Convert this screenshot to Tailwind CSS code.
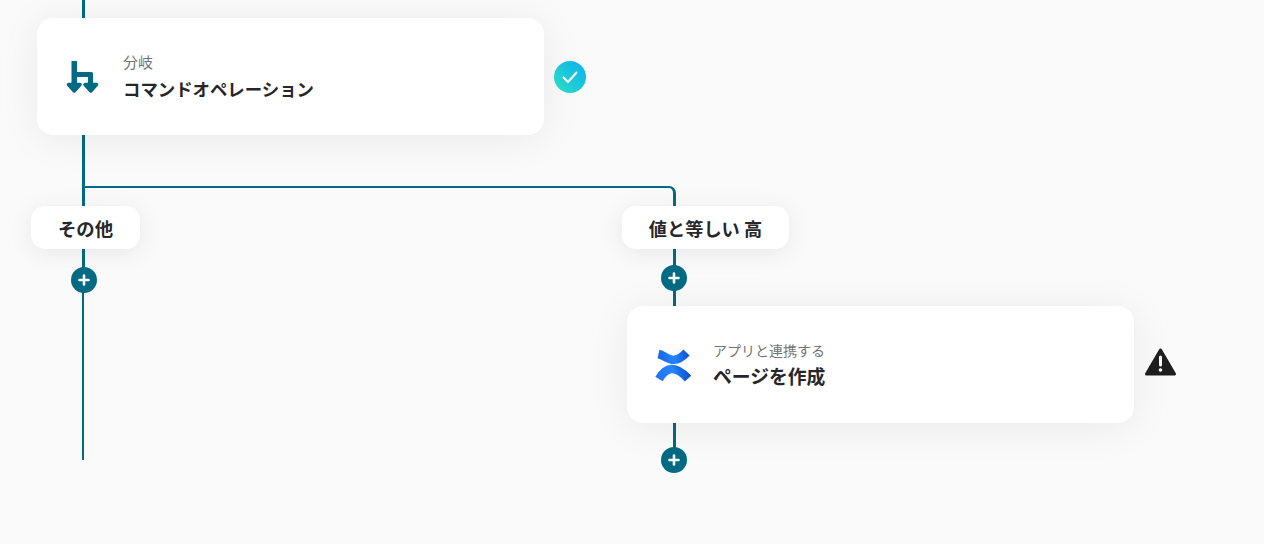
<!DOCTYPE html>
<html lang="ja">
<head>
<meta charset="utf-8">
<script src="https://cdn.jsdelivr.net/npm/@tailwindcss/browser@4"></script>
</head>
<body class="m-0">
<div class="relative w-[1264px] h-[544px] overflow-hidden bg-[#fafafa] text-[#27272a] font-['Noto_Sans_CJK_JP','Noto_Sans',sans-serif]">
  <!-- connectors -->
  <div class="absolute left-[82px] top-0 w-[3px] h-[280px] bg-[#036a83]"></div>
  <div class="absolute left-[82px] top-[280px] w-[2px] h-[180px] bg-[#036a83]"></div>
  <div class="absolute left-[85px] top-[186px] w-[591px] h-[30px] border-t-2 border-r-[3px] border-[#036a83] rounded-tr-[7px]"></div>
  <div class="absolute left-[673px] top-[240px] w-[3px] h-[70px] bg-[#036a83]"></div>
  <div class="absolute left-[673px] top-[420px] w-[3px] h-[30px] bg-[#036a83]"></div>

  <!-- node 1 -->
  <div class="absolute left-[37px] top-[18px] w-[507px] h-[117px] rounded-[16px] bg-white shadow-[0_4px_40px_rgba(0,0,0,0.07)] flex items-center pl-[28px] gap-[22px]">
    <svg class="w-[36px] h-[36px] shrink-0" viewBox="0 0 36 36" fill="#036a83">
      <path d="M6.500 2h5.500v11h14.500a1.500 1.500 0 0 1 1.500 1.500V26h-5v-8H12v8H6.500z"/>
      <path d="M3.500 25.500h11.500l-5.750 6.500z" stroke="#036a83" stroke-width="3.500" stroke-linejoin="round"/>
      <path d="M20 25.500h11.500l-5.750 6.500z" stroke="#036a83" stroke-width="3.500" stroke-linejoin="round"/>
    </svg>
    <div class="flex flex-col pt-[1px]">
      <span class="text-[15px] leading-[20px] text-[#737373]">分岐</span>
      <span class="text-[17.4px] leading-[28px] mt-[3px] font-bold whitespace-nowrap">コマンドオペレーション</span>
    </div>
  </div>
  <div class="absolute left-[554px] top-[61px] w-[32px] h-[32px] rounded-full bg-gradient-to-tr from-[#30e0c0] to-[#10aef0] flex items-center justify-center">
    <svg class="w-[18px] h-[18px]" viewBox="0 0 18 18" fill="none" stroke="#fff" stroke-width="2" stroke-linecap="round" stroke-linejoin="round"><path d="M2.500 9.500l4.500 4.500 8.500-9.500"/></svg>
  </div>

  <!-- pills -->
  <div class="absolute left-[31px] top-[206px] w-[109px] h-[43px] rounded-[14px] bg-white shadow-[0_4px_24px_rgba(0,0,0,0.08)] flex items-center justify-center pt-[2px] text-[18.400px] font-bold">その他</div>
  <div class="absolute left-[622px] top-[206px] w-[167px] h-[43px] rounded-[14px] bg-white shadow-[0_4px_24px_rgba(0,0,0,0.08)] flex items-center justify-center pt-[2px] text-[18.200px] font-bold whitespace-nowrap">値と等しい 高</div>

  <!-- plus buttons -->
  <div class="absolute left-[71px] top-[267px] w-[26px] h-[26px] rounded-full bg-[#036a83] flex items-center justify-center">
    <svg class="w-[12px] h-[12px]" viewBox="0 0 12 12" stroke="#fff" stroke-width="2.600" stroke-linecap="round"><path d="M6 1.500v9M1.500 6h9"/></svg>
  </div>
  <div class="absolute left-[661px] top-[265px] w-[26px] h-[26px] rounded-full bg-[#036a83] flex items-center justify-center">
    <svg class="w-[12px] h-[12px]" viewBox="0 0 12 12" stroke="#fff" stroke-width="2.600" stroke-linecap="round"><path d="M6 1.500v9M1.500 6h9"/></svg>
  </div>
  <div class="absolute left-[661px] top-[447px] w-[26px] h-[26px] rounded-full bg-[#036a83] flex items-center justify-center">
    <svg class="w-[12px] h-[12px]" viewBox="0 0 12 12" stroke="#fff" stroke-width="2.600" stroke-linecap="round"><path d="M6 1.500v9M1.500 6h9"/></svg>
  </div>

  <!-- node 2 -->
  <div class="absolute left-[627px] top-[306px] w-[507px] h-[117px] rounded-[16px] bg-white shadow-[0_4px_40px_rgba(0,0,0,0.07)] flex items-center pl-[28px] gap-[22px]">
    <svg class="w-[36px] h-[36px] shrink-0" viewBox="0 0 36 36" fill="none" stroke-width="8.500">
      <defs>
        <linearGradient id="cfa" gradientUnits="userSpaceOnUse" x1="34" y1="4" x2="3" y2="10"><stop offset="0" stop-color="#0b52cc"/><stop offset="0.5" stop-color="#2684ff"/><stop offset="1" stop-color="#1a66e6"/></linearGradient>
        <linearGradient id="cfb" gradientUnits="userSpaceOnUse" x1="3" y1="32" x2="34" y2="26"><stop offset="0" stop-color="#1f74f0"/><stop offset="0.5" stop-color="#2684ff"/><stop offset="1" stop-color="#0b52cc"/></linearGradient>
      </defs>
      <path stroke="url(#cfa)" d="M3.500 7C12 9 18 20 31.500 5.500"/>
      <path stroke="url(#cfb)" d="M4 32C11 20 20 17.500 33 31.500"/>
    </svg>
    <div class="flex flex-col pt-[1px]">
      <span class="text-[14px] leading-[20px] text-[#737373] whitespace-nowrap">アプリと連携する</span>
      <span class="text-[18.800px] leading-[28px] mt-[2px] font-bold whitespace-nowrap">ページを作成</span>
    </div>
  </div>
  <svg class="absolute left-[1144px] top-[347px] w-[33px] h-[30px]" viewBox="0 0 33 30">
    <path fill="#1e1e1e" stroke="#1e1e1e" stroke-width="3" stroke-linejoin="round" d="M16.500 3L30.500 27H2.500z"/>
    <path stroke="#fff" stroke-width="3" stroke-linecap="round" d="M16.500 10v8"/>
    <circle cx="16.500" cy="23" r="1.800" fill="#fff"/>
  </svg>
</div>
</body>
</html>
